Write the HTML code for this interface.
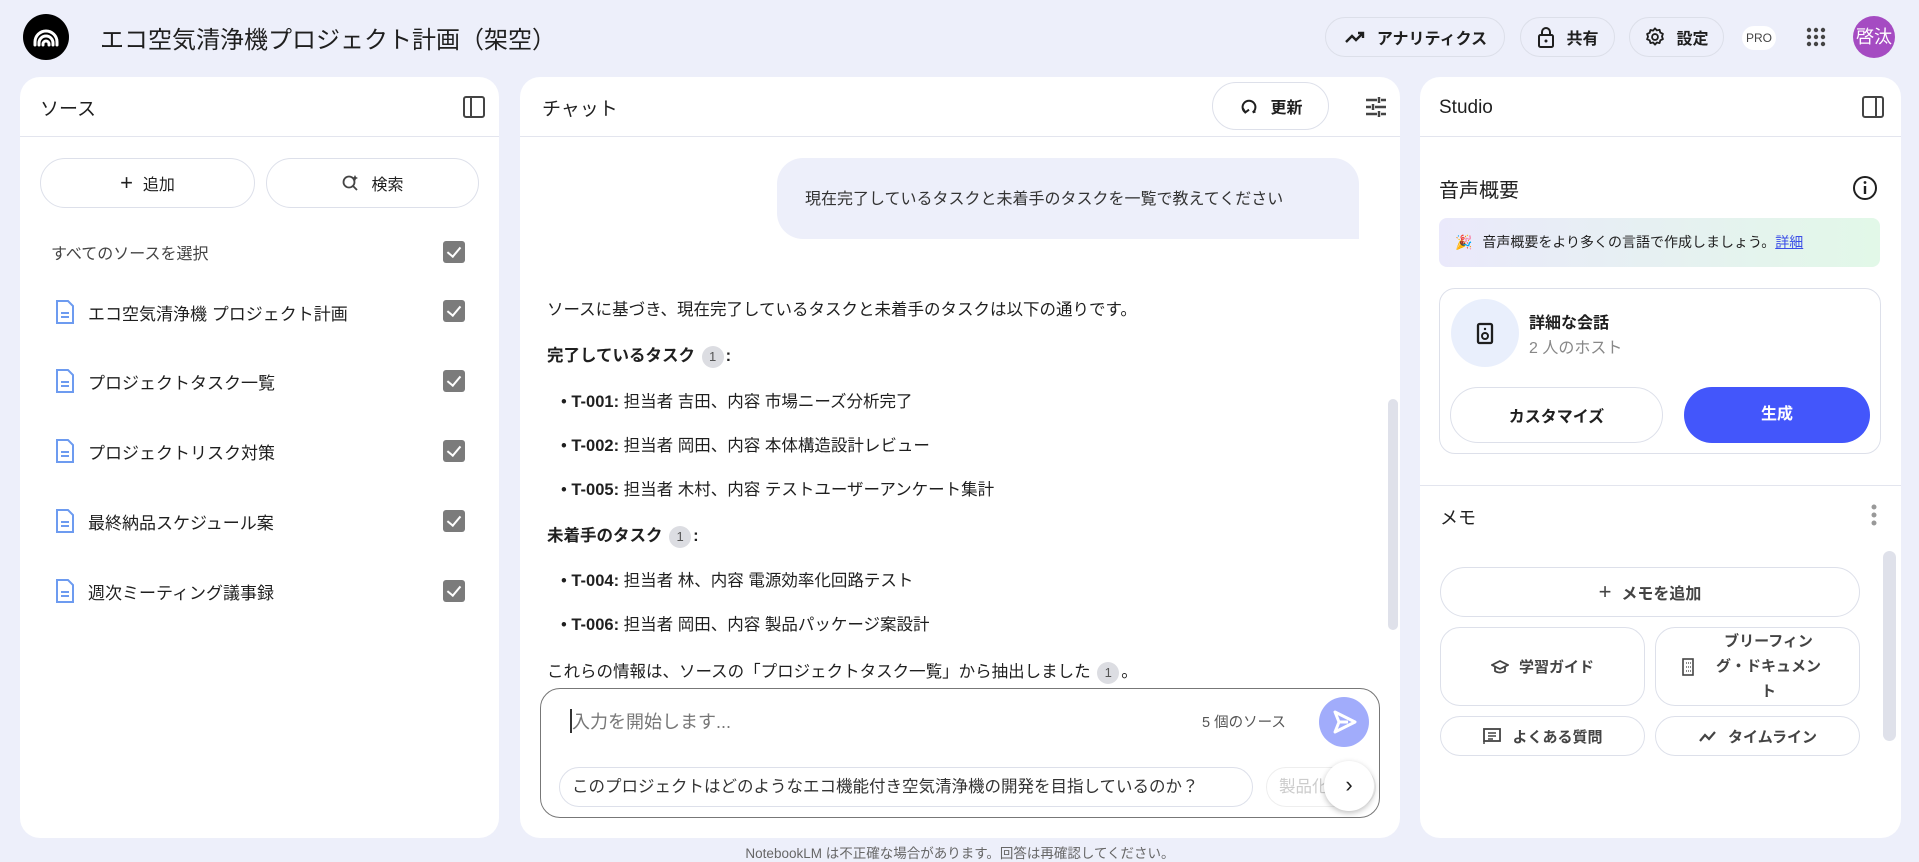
<!DOCTYPE html>
<html><head><meta charset="utf-8"><style>
*{box-sizing:border-box;margin:0;padding:0}
body{width:1919px;height:860px;background:#edeffa;font-family:"Liberation Sans","Noto Sans CJK JP",sans-serif;color:#1f1f1f;position:relative;overflow:hidden}
.abs{position:absolute}
.panel{position:absolute;top:77px;height:761px;background:#fff;border-radius:20px;overflow:hidden}
.ph{position:absolute;left:0;right:0;top:0;height:60px;border-bottom:1px solid #e3e5ee}
.ph span{position:absolute;top:17px;font-size:19px}
.btn{position:absolute;border:1px solid #dde0ea;border-radius:26px;display:flex;align-items:center;justify-content:center;font-size:16px;background:#fff;gap:10px}
.cb{position:absolute;width:22px;height:22px;background:#7b7b7b;border-radius:3px}
.cb:after{content:"";position:absolute;left:7px;top:3px;width:6px;height:11px;border:solid #fff;border-width:0 2px 2px 0;transform:rotate(40deg)}
.src{position:absolute;left:35px;font-size:17px;display:flex;align-items:center;gap:13px}
.txt{position:absolute;left:547px;font-size:16.5px;white-space:nowrap}
.b{font-weight:bold}
.badge{display:inline-block;width:22px;height:22px;border-radius:11px;background:#dcdde2;color:#555;font-size:13px;text-align:center;line-height:22px;vertical-align:middle;margin:0 2px}
.tb{position:absolute;top:17px;height:40px;border:1px solid #dcdfe9;border-radius:20px;display:flex;align-items:center;justify-content:center;gap:10px;font-size:16px;font-weight:bold}
</style></head><body>
<div class="abs" style="left:23px;top:14px;width:46px;height:46px;border-radius:50%;background:#000">
<svg width="46" height="46" viewBox="0 0 46 46"><g fill="none" stroke="#fff" stroke-width="3" stroke-linecap="round"><path d="M12 31v-3a11 11 0 0 1 22 0v3"/><path d="M16 31v-2a7 7 0 0 1 14 0v2"/><path d="M20 31v-1a3 3 0 0 1 6 0v1"/></g></svg></div>
<div class="abs" style="left:100px;top:20px;font-size:24px">エコ空気清浄機プロジェクト計画（架空）</div>
<div class="tb" style="left:1325px;width:180px"><svg width="24" height="24" viewBox="0 0 24 24"><path d="M3 17l6-6 4 4 7-7M15 8h5v5" fill="none" stroke="#1f1f1f" stroke-width="2.4"/></svg>アナリティクス</div>
<div class="tb" style="left:1520px;width:95px"><svg width="20" height="22" viewBox="0 0 20 22"><rect x="3" y="9" width="14" height="12" rx="1.5" fill="none" stroke="#1f1f1f" stroke-width="2"/><path d="M6 9V6a4 4 0 0 1 8 0v3" fill="none" stroke="#1f1f1f" stroke-width="2"/><circle cx="10" cy="15" r="1.5" fill="#1f1f1f"/></svg>共有</div>
<div class="tb" style="left:1629px;width:95px"><svg width="22" height="22" viewBox="0 0 24 24"><circle cx="12" cy="12" r="3.2" fill="none" stroke="#1f1f1f" stroke-width="2"/><path d="M12 2.5l2 2.3 3-.6.8 3 2.8 1.3-1 2.9 1 2.9-2.8 1.3-.8 3-3-.6-2 2.3-2-2.3-3 .6-.8-3L3.4 14.5l1-2.9-1-2.9 2.8-1.3.8-3 3 .6z" fill="none" stroke="#1f1f1f" stroke-width="2" stroke-linejoin="round"/></svg>設定</div>
<div class="abs" style="left:1742px;top:26px;width:34px;height:24px;border-radius:12px;background:#fff;font-size:12px;color:#444;text-align:center;line-height:24px">PRO</div>
<svg class="abs" style="left:1805px;top:26px" width="22" height="22" viewBox="0 0 22 22" fill="#444"><circle cx="4" cy="4" r="2.2"/><circle cx="11" cy="4" r="2.2"/><circle cx="18" cy="4" r="2.2"/><circle cx="4" cy="11" r="2.2"/><circle cx="11" cy="11" r="2.2"/><circle cx="18" cy="11" r="2.2"/><circle cx="4" cy="18" r="2.2"/><circle cx="11" cy="18" r="2.2"/><circle cx="18" cy="18" r="2.2"/></svg>
<div class="abs" style="left:1853px;top:16px;width:42px;height:42px;border-radius:50%;background:#a54bc2;color:#fff;font-size:18px;text-align:center;line-height:42px">啓汰</div>

<div class="panel" style="left:20px;width:479px">
<div class="ph"><span style="left:20px">ソース</span>
<svg class="abs" style="left:442px;top:18px" width="24" height="24" viewBox="0 0 24 24"><rect x="2" y="2" width="20" height="20" rx="2" fill="none" stroke="#444" stroke-width="2"/><path d="M9 2v20" stroke="#444" stroke-width="2"/></svg></div>
<div class="btn" style="left:20px;top:81px;width:215px;height:50px"><span style="font-size:22px;font-weight:300">+</span>追加</div>
<div class="btn" style="left:246px;top:81px;width:213px;height:50px"><svg width="20" height="20" viewBox="0 0 20 20"><circle cx="8" cy="9" r="5.5" fill="none" stroke="#444" stroke-width="1.8"/><path d="M12 13l4 4" stroke="#444" stroke-width="1.8"/><path d="M14 2l1 2 2 1-2 1-1 2-1-2-2-1 2-1z" fill="#444"/></svg>検索</div>
<div class="abs" style="left:31px;top:163px;font-size:16px;color:#444">すべてのソースを選択</div>
<div class="cb" style="left:423px;top:164px"></div>
</div>
<div class="abs" style="left:20px;top:77px;width:479px;height:761px">
<div class="src" style="top:222px"><svg width="20" height="26" viewBox="0 0 20 26"><path d="M2 2h11l5 5v17H2z" fill="none" stroke="#6d9bf0" stroke-width="2"/><path d="M6 14h8M6 18h8" stroke="#6d9bf0" stroke-width="2"/></svg><span>エコ空気清浄機 プロジェクト計画</span></div>
<div class="cb" style="left:423px;top:223px"></div>
<div class="src" style="top:291px"><svg width="20" height="26" viewBox="0 0 20 26"><path d="M2 2h11l5 5v17H2z" fill="none" stroke="#6d9bf0" stroke-width="2"/><path d="M6 14h8M6 18h8" stroke="#6d9bf0" stroke-width="2"/></svg><span>プロジェクトタスク一覧</span></div>
<div class="cb" style="left:423px;top:293px"></div>
<div class="src" style="top:361px"><svg width="20" height="26" viewBox="0 0 20 26"><path d="M2 2h11l5 5v17H2z" fill="none" stroke="#6d9bf0" stroke-width="2"/><path d="M6 14h8M6 18h8" stroke="#6d9bf0" stroke-width="2"/></svg><span>プロジェクトリスク対策</span></div>
<div class="cb" style="left:423px;top:363px"></div>
<div class="src" style="top:431px"><svg width="20" height="26" viewBox="0 0 20 26"><path d="M2 2h11l5 5v17H2z" fill="none" stroke="#6d9bf0" stroke-width="2"/><path d="M6 14h8M6 18h8" stroke="#6d9bf0" stroke-width="2"/></svg><span>最終納品スケジュール案</span></div>
<div class="cb" style="left:423px;top:433px"></div>
<div class="src" style="top:501px"><svg width="20" height="26" viewBox="0 0 20 26"><path d="M2 2h11l5 5v17H2z" fill="none" stroke="#6d9bf0" stroke-width="2"/><path d="M6 14h8M6 18h8" stroke="#6d9bf0" stroke-width="2"/></svg><span>週次ミーティング議事録</span></div>
<div class="cb" style="left:423px;top:503px"></div>
</div>

<div class="panel" style="left:520px;width:880px">
<div class="ph"><span style="left:22px">チャット</span></div>
<div class="btn" style="left:692px;top:5px;width:117px;height:48px;font-weight:bold"><svg width="22" height="22" viewBox="0 0 24 24"><path d="M8 19a7 7 0 1 1 8 0M5 14l3 5 4-3M16 19l3-1" fill="none" stroke="#1f1f1f" stroke-width="2.2"/></svg>更新</div>
<svg class="abs" style="left:844px;top:18px" width="24" height="24" viewBox="0 0 24 24" stroke="#444" stroke-width="2.5"><path d="M2 5h11M17 5h5M15 2v6M2 12h5M11 12h11M9 9v6M2 19h11M17 19h5M15 16v6"/></svg>
<div class="abs" style="left:257px;top:81px;width:582px;height:81px;background:#edeffa;border-radius:26px 26px 0 26px"></div>
<div class="abs" style="left:285px;top:108px;font-size:16px;color:#333">現在完了しているタスクと未着手のタスクを一覧で教えてください</div>
<div class="abs" style="left:868px;top:322px;width:10px;height:231px;border-radius:5px;background:#dfe1ea"></div>
<div class="abs" style="left:20px;top:611px;width:840px;height:130px;border:1px solid #777;border-radius:20px;background:#fff"></div>
<div class="abs" style="left:50px;top:632px;width:1.5px;height:24px;background:#333"></div>
<div class="abs" style="left:52px;top:631px;font-size:18px;color:#777">入力を開始します...</div>
<div class="abs" style="left:682px;top:634px;font-size:14.5px;color:#555">5 個のソース</div>
<div class="abs" style="left:799px;top:620px;width:50px;height:50px;border-radius:50%;background:#a1acfb"><svg width="50" height="50" viewBox="0 0 50 50"><path d="M16 15l20 10-20 10 4-10z" fill="none" stroke="#fff" stroke-width="3" stroke-linejoin="round"/><path d="M20 25h9" stroke="#fff" stroke-width="3"/></svg></div>
<div class="abs" style="left:39px;top:690px;width:694px;height:40px;border:1px solid #dde0ea;border-radius:20px;font-size:16.5px;line-height:38px;padding-left:12px;color:#333">このプロジェクトはどのようなエコ機能付き空気清浄機の開発を目指しているのか？</div>
<div class="abs" style="left:746px;top:690px;width:110px;height:40px;border:1px solid #eee;border-radius:20px;font-size:16.5px;line-height:38px;padding-left:12px;color:#ccc">製品化</div>
<div class="abs" style="left:804px;top:684px;width:50px;height:50px;border-radius:50%;background:#fff;box-shadow:0 2px 6px rgba(0,0,0,.25);text-align:center;line-height:48px;font-size:22px">›</div>
</div>
<div class="txt" style="top:296px">ソースに基づき、現在完了しているタスクと未着手のタスクは以下の通りです。</div>
<div class="txt b" style="top:342px">完了しているタスク <span class="badge" style="font-weight:normal">1</span>:</div>
<div class="txt" style="left:561px;top:388px">• <b>T-001:</b> 担当者 吉田、内容 市場ニーズ分析完了</div>
<div class="txt" style="left:561px;top:432px">• <b>T-002:</b> 担当者 岡田、内容 本体構造設計レビュー</div>
<div class="txt" style="left:561px;top:476px">• <b>T-005:</b> 担当者 木村、内容 テストユーザーアンケート集計</div>
<div class="txt b" style="top:522px">未着手のタスク <span class="badge" style="font-weight:normal">1</span>:</div>
<div class="txt" style="left:561px;top:567px">• <b>T-004:</b> 担当者 林、内容 電源効率化回路テスト</div>
<div class="txt" style="left:561px;top:611px">• <b>T-006:</b> 担当者 岡田、内容 製品パッケージ案設計</div>
<div class="txt" style="top:658px">これらの情報は、ソースの「プロジェクトタスク一覧」から抽出しました <span class="badge">1</span>。</div>

<div class="panel" style="left:1420px;width:481px">
<div class="ph"><span style="left:19px;top:20px">Studio</span>
<svg class="abs" style="left:441px;top:18px" width="24" height="24" viewBox="0 0 24 24"><rect x="2" y="2" width="20" height="20" rx="2" fill="none" stroke="#444" stroke-width="2"/><path d="M15 2v20" stroke="#444" stroke-width="2"/></svg></div>
<div class="abs" style="left:19px;top:97px;font-size:20px">音声概要</div>
<svg class="abs" style="left:432px;top:98px" width="26" height="26" viewBox="0 0 26 26"><circle cx="13" cy="13" r="11" fill="none" stroke="#1f1f1f" stroke-width="2"/><path d="M13 11v8" stroke="#1f1f1f" stroke-width="2.4"/><circle cx="13" cy="7.5" r="1.4" fill="#1f1f1f"/></svg>
<div class="abs" style="left:19px;top:141px;width:441px;height:49px;border-radius:8px;background:linear-gradient(90deg,#eae9fb,#e2f8e8);font-size:14px;line-height:49px;padding-left:16px">🎉 <span style="margin-left:6px">音声概要をより多くの言語で作成しましょう。</span><span style="color:#3b4ee8;text-decoration:underline">詳細</span></div>
<div class="abs" style="left:19px;top:211px;width:442px;height:166px;border:1px solid #dde0ea;border-radius:16px"></div>
<div class="abs" style="left:31px;top:222px;width:68px;height:68px;border-radius:50%;background:#e9effc"><svg width="68" height="68" viewBox="0 0 68 68"><rect x="27" y="25" width="14" height="19" rx="1.5" fill="none" stroke="#1f1f1f" stroke-width="2.3"/><circle cx="34" cy="37" r="3" fill="none" stroke="#1f1f1f" stroke-width="2"/><circle cx="34" cy="30" r="1.2" fill="#1f1f1f"/></svg></div>
<div class="abs" style="left:109px;top:232px;font-size:16px;font-weight:bold">詳細な会話</div>
<div class="abs" style="left:109px;top:257px;font-size:16px;color:#888">2 人のホスト</div>
<div class="btn" style="left:30px;top:310px;width:213px;height:56px;border-radius:28px;font-weight:bold">カスタマイズ</div>
<div class="abs" style="left:264px;top:310px;width:186px;height:56px;border-radius:28px;background:#4356fb;color:#fff;font-weight:bold;font-size:16px;text-align:center;line-height:56px">生成</div>
<div class="abs" style="left:0;right:0;top:408px;height:1px;background:#e3e5ee"></div>
<div class="abs" style="left:20px;top:427px;font-size:18px">メモ</div>
<svg class="abs" style="left:450px;top:426px" width="8" height="24" viewBox="0 0 8 24" fill="#999"><circle cx="4" cy="4" r="2.5"/><circle cx="4" cy="12" r="2.5"/><circle cx="4" cy="20" r="2.5"/></svg>
<div class="abs" style="left:463px;top:474px;width:13px;height:190px;border-radius:7px;background:#dfe1ea"></div>
<div class="btn" style="left:20px;top:490px;width:420px;height:50px;font-weight:bold;color:#444"><span style="font-size:22px;font-weight:300">+</span>メモを追加</div>
<div class="btn" style="left:20px;top:550px;width:205px;height:79px;border-radius:20px;font-weight:bold;color:#444;font-size:15px"><svg width="18" height="18" viewBox="0 0 18 18"><path d="M1 7l8-4 8 4-8 4z M4 9v4c3 2 7 2 10 0V9" fill="none" stroke="#444" stroke-width="1.8"/></svg>学習ガイド</div>
<div class="btn" style="left:235px;top:550px;width:205px;height:79px;border-radius:20px;font-weight:bold;color:#444;font-size:15px;line-height:25px"><svg width="12" height="18" viewBox="0 0 12 18"><rect x="1" y="1" width="10" height="16" fill="none" stroke="#444" stroke-width="1.6"/><path d="M4 5h5M4 9h5M4 13h5" stroke="#444" stroke-width="1.2" stroke-dasharray="1 1"/></svg><span style="text-align:center;width:130px">ブリーフィン<br>グ・ドキュメン<br>ト</span></div>
<div class="btn" style="left:20px;top:639px;width:205px;height:40px;font-weight:bold;color:#444;font-size:15px"><svg width="20" height="18" viewBox="0 0 20 18"><rect x="2" y="2" width="16" height="12" fill="none" stroke="#444" stroke-width="1.8"/><path d="M2 14v3M6 6h8M6 9h8M6 12h5" stroke="#444" stroke-width="1.5"/></svg>よくある質問</div>
<div class="btn" style="left:235px;top:639px;width:205px;height:40px;font-weight:bold;color:#444;font-size:15px"><svg width="20" height="14" viewBox="0 0 20 14"><path d="M2 12l5-6 4 4 6-7" fill="none" stroke="#444" stroke-width="2.2"/></svg>タイムライン</div>
</div>

<div class="abs" style="left:520px;width:880px;top:842px;text-align:center;font-size:13.5px;color:#666">NotebookLM は不正確な場合があります。回答は再確認してください。</div>
</body></html>
